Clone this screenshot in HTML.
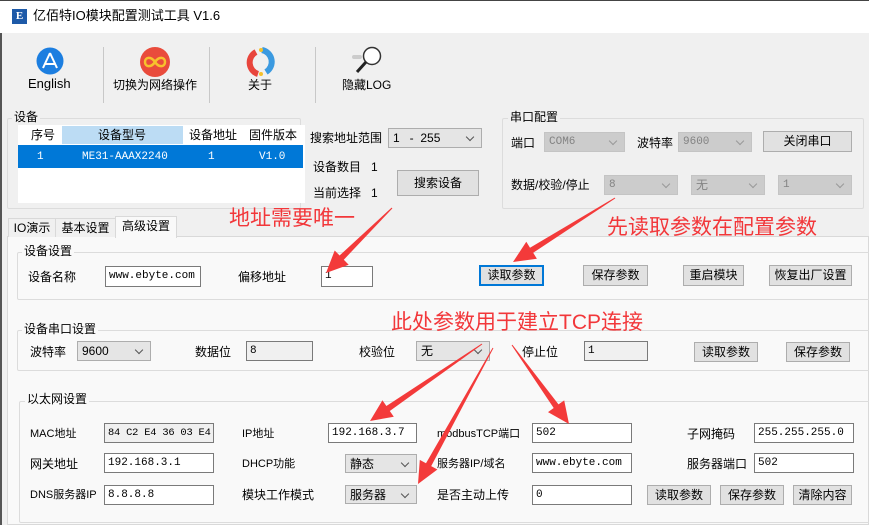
<!DOCTYPE html>
<html><head><meta charset="utf-8"><style>
*{margin:0;padding:0;box-sizing:border-box}
body{width:869px;height:525px;overflow:hidden;background:#f0f0f0;position:relative;font-family:"Liberation Sans","Noto Sans CJK SC",sans-serif;font-size:12px;color:#000}
.a{position:absolute;white-space:nowrap}
.t{position:absolute;white-space:nowrap;line-height:14px}
.grp{position:absolute;border:1px solid #dcdcdc;border-radius:2px}
.gl{position:absolute;background:inherit;padding:0 2px;line-height:14px;white-space:nowrap}
.in{position:absolute;background:#fff;border:1px solid #7a7a7a;font-family:"Liberation Mono","Noto Sans CJK SC",monospace;font-size:11px;padding:2px 0 0 3px;line-height:14px;white-space:nowrap;overflow:hidden}
.ro{background:#f0f0f0}
.cb{position:absolute;background:#e5e5e5;border:1px solid #adadad;padding:2px 0 0 4px;line-height:14px;white-space:nowrap;font-size:12px}
.cb.dis{background:#cccccc;border-color:#c4c4c4;color:#838383;font-family:"Liberation Mono","Noto Sans CJK SC",monospace;font-size:11px}
.cb:after{content:"";position:absolute;right:8px;top:5px;width:5px;height:5px;border-right:1px solid #555;border-bottom:1px solid #555;transform:rotate(45deg)}
.cb.dis:after{border-color:#999}
.bt{position:absolute;background:#e1e1e1;border:1px solid #adadad;text-align:center;line-height:19px;white-space:nowrap}
.red{position:absolute;color:#f2373a;font-size:21px;white-space:nowrap;line-height:24px}
</style></head><body>
<div class="a" style="left:0;top:33px;width:2px;height:492px;background:#555"></div>
<div class="a" style="left:0;top:0;width:869px;height:33px;background:#fff"></div>
<div class="a" style="left:0;top:0;width:869px;height:1px;background:#444"></div>
<div class="a" style="left:12px;top:9px;width:15px;height:15px;background:#1e5aa8;color:#fff;font-weight:bold;font-size:11px;line-height:15px;text-align:center;font-family:'Liberation Serif',serif">E</div>
<div class="t" style="left:33px;top:9px;font-size:13px">亿佰特IO模块配置测试工具 V1.6</div>

<svg class="a" style="left:36px;top:47px" width="28" height="28" viewBox="0 0 28 28"><circle cx="14" cy="14" r="13.5" fill="#1c7ee0"/><path d="M14 6 L7 21 M14 6 L21 21 M9 17 H19" stroke="#fff" stroke-width="2" fill="none"/></svg>
<div class="t" style="left:28px;top:77px;font-size:13px">English</div>
<div class="a" style="left:103px;top:47px;width:1px;height:56px;background:#c8c8c8"></div>
<svg class="a" style="left:140px;top:47px" width="30" height="30" viewBox="0 0 30 30"><circle cx="15" cy="15" r="15" fill="#e94b3c"/><path d="M15 15 C11 9,5 10,5 15 C5 20,11 21,15 15 C19 9,25 10,25 15 C25 20,19 21,15 15Z" stroke="#f7c12d" stroke-width="2.5" fill="none"/></svg>
<div class="t" style="left:113px;top:78px;font-size:12px">切换为网络操作</div>
<div class="a" style="left:209px;top:47px;width:1px;height:56px;background:#c8c8c8"></div>
<svg class="a" style="left:246px;top:47px" width="30" height="30" viewBox="0 0 30 30"><path d="M16 3 A12 12 0 0 1 20 25" stroke="#3b9ae0" stroke-width="6" fill="none"/><path d="M12 27 A12 12 0 0 1 10 5" stroke="#e8453c" stroke-width="6" fill="none"/><circle cx="15" cy="3" r="2" fill="#f5c02a"/><circle cx="15" cy="27" r="2" fill="#f5c02a"/></svg>
<div class="t" style="left:248px;top:78px;font-size:12px">关于</div>
<div class="a" style="left:315px;top:47px;width:1px;height:56px;background:#c8c8c8"></div>
<svg class="a" style="left:352px;top:46px" width="32" height="32" viewBox="0 0 32 32"><rect x="0" y="9" width="10" height="4" rx="2" fill="#ccc"/><circle cx="20" cy="10" r="8.5" fill="#fff" stroke="#333" stroke-width="1.5"/><path d="M14 16 L5 26" stroke="#222" stroke-width="3"/></svg>
<div class="t" style="left:342px;top:78px;font-size:12px">隐藏LOG</div>

<div class="grp" style="left:7px;top:118px;width:294px;height:91px;background:#f0f0f0"></div>
<div class="gl" style="left:12px;top:110px;background:#f0f0f0">设备</div>
<div class="a" style="left:18px;top:125px;width:287px;height:78px;background:#fff"></div>
<div class="a" style="left:62px;top:126px;width:121px;height:18px;background:#bcdcf4"></div>
<div class="t" style="left:31px;top:128px">序号</div>
<div class="t" style="left:98px;top:128px">设备型号</div>
<div class="t" style="left:189px;top:128px">设备地址</div>
<div class="t" style="left:249px;top:128px">固件版本</div>
<div class="a" style="left:18px;top:145px;width:285px;height:23px;background:#0078d7"></div>
<div class="t" style="left:37px;top:150px;color:#fff;font-family:'Liberation Mono',monospace;font-size:11px">1</div>
<div class="t" style="left:82px;top:150px;color:#fff;font-family:'Liberation Mono',monospace;font-size:11px">ME31-AAAX2240</div>
<div class="t" style="left:208px;top:150px;color:#fff;font-family:'Liberation Mono',monospace;font-size:11px">1</div>
<div class="t" style="left:259px;top:150px;color:#fff;font-family:'Liberation Mono',monospace;font-size:11px">V1.0</div>
<div class="t" style="left:310px;top:131px">搜索地址范围</div>
<div class="cb" style="left:388px;top:128px;width:94px;height:20px">1&nbsp;&nbsp;&nbsp;-&nbsp;&nbsp;255</div>
<div class="t" style="left:313px;top:160px">设备数目&nbsp;&nbsp;&nbsp;1</div>
<div class="t" style="left:313px;top:186px">当前选择&nbsp;&nbsp;&nbsp;1</div>
<div class="bt" style="left:397px;top:170px;width:82px;height:26px;line-height:24px">搜索设备</div>

<div class="grp" style="left:502px;top:118px;width:362px;height:91px"></div>
<div class="gl" style="left:508px;top:110px;background:#f0f0f0">串口配置</div>
<div class="t" style="left:511px;top:136px">端口</div>
<div class="cb dis" style="left:544px;top:132px;width:81px;height:20px">COM6</div>
<div class="t" style="left:637px;top:136px">波特率</div>
<div class="cb dis" style="left:678px;top:132px;width:74px;height:20px">9600</div>
<div class="bt" style="left:763px;top:131px;width:89px;height:21px">关闭串口</div>
<div class="t" style="left:511px;top:178px">数据/校验/停止</div>
<div class="cb dis" style="left:604px;top:175px;width:74px;height:20px">8</div>
<div class="cb dis" style="left:691px;top:175px;width:74px;height:20px;font-family:'Liberation Sans','Noto Sans CJK SC',sans-serif;font-size:12px">无</div>
<div class="cb dis" style="left:778px;top:175px;width:74px;height:20px">1</div>

<div class="a" style="left:7px;top:236px;width:862px;height:289px;background:#f9f9f9;border:1px solid #d9d9d9"></div>
<div class="a" style="left:8px;top:218px;width:48px;height:19px;border:1px solid #d9d9d9;border-bottom:none;background:#f0f0f0;text-align:center;line-height:18px">IO演示</div>
<div class="a" style="left:55px;top:218px;width:61px;height:19px;border:1px solid #d9d9d9;border-bottom:none;background:#f0f0f0;text-align:center;line-height:18px">基本设置</div>
<div class="a" style="left:115px;top:216px;width:62px;height:22px;border:1px solid #d9d9d9;border-bottom:none;background:#f9f9f9;text-align:center;line-height:19px">高级设置</div>

<div class="grp" style="left:17px;top:252px;width:860px;height:48px"></div>
<div class="gl" style="left:22px;top:244px;background:#f9f9f9">设备设置</div>
<div class="t" style="left:28px;top:270px">设备名称</div>
<div class="in" style="left:105px;top:266px;width:96px;height:21px">www.ebyte.com</div>
<div class="t" style="left:238px;top:270px">偏移地址</div>
<div class="in" style="left:321px;top:266px;width:52px;height:21px">1</div>
<div class="bt" style="left:479px;top:265px;width:65px;height:21px;border:2px solid #0078d7;line-height:17px">读取参数</div>
<div class="bt" style="left:583px;top:265px;width:65px;height:21px">保存参数</div>
<div class="bt" style="left:683px;top:265px;width:61px;height:21px">重启模块</div>
<div class="bt" style="left:769px;top:265px;width:83px;height:21px">恢复出厂设置</div>

<div class="grp" style="left:17px;top:330px;width:860px;height:41px"></div>
<div class="gl" style="left:22px;top:322px;background:#f9f9f9">设备串口设置</div>
<div class="t" style="left:30px;top:345px">波特率</div>
<div class="cb" style="left:77px;top:341px;width:74px;height:20px">9600</div>
<div class="t" style="left:195px;top:345px">数据位</div>
<div class="in ro" style="left:246px;top:341px;width:67px;height:20px">8</div>
<div class="t" style="left:359px;top:345px">校验位</div>
<div class="cb" style="left:416px;top:341px;width:74px;height:20px">无</div>
<div class="t" style="left:522px;top:345px">停止位</div>
<div class="in ro" style="left:584px;top:341px;width:64px;height:20px">1</div>
<div class="bt" style="left:694px;top:342px;width:64px;height:20px">读取参数</div>
<div class="bt" style="left:786px;top:342px;width:64px;height:20px">保存参数</div>

<div class="grp" style="left:19px;top:401px;width:860px;height:122px"></div>
<div class="gl" style="left:25px;top:392px;background:#f9f9f9">以太网设置</div>
<div class="t" style="left:30px;top:427px;font-size:11px">MAC地址</div>
<div class="in ro" style="left:104px;top:423px;width:110px;height:20px;font-size:10.4px;letter-spacing:-0.2px">84 C2 E4 36 03 E4</div>
<div class="t" style="left:242px;top:427px;font-size:11px">IP地址</div>
<div class="in" style="left:328px;top:423px;width:89px;height:20px">192.168.3.7</div>
<div class="t" style="left:437px;top:427px;font-size:11px">modbusTCP端口</div>
<div class="in" style="left:532px;top:423px;width:100px;height:20px">502</div>
<div class="t" style="left:687px;top:427px">子网掩码</div>
<div class="in" style="left:754px;top:423px;width:100px;height:20px">255.255.255.0</div>

<div class="t" style="left:30px;top:457px">网关地址</div>
<div class="in" style="left:104px;top:453px;width:110px;height:20px">192.168.3.1</div>
<div class="t" style="left:242px;top:457px;font-size:11px">DHCP功能</div>
<div class="cb" style="left:345px;top:454px;width:72px;height:19px">静态</div>
<div class="t" style="left:437px;top:457px;font-size:11px">服务器IP/域名</div>
<div class="in" style="left:532px;top:453px;width:100px;height:20px">www.ebyte.com</div>
<div class="t" style="left:687px;top:457px">服务器端口</div>
<div class="in" style="left:754px;top:453px;width:100px;height:20px">502</div>

<div class="t" style="left:30px;top:488px;font-size:11px">DNS服务器IP</div>
<div class="in" style="left:104px;top:485px;width:110px;height:20px">8.8.8.8</div>
<div class="t" style="left:242px;top:488px">模块工作模式</div>
<div class="cb" style="left:345px;top:485px;width:72px;height:19px">服务器</div>
<div class="t" style="left:437px;top:488px">是否主动上传</div>
<div class="in" style="left:532px;top:485px;width:100px;height:20px">0</div>
<div class="bt" style="left:647px;top:485px;width:64px;height:20px">读取参数</div>
<div class="bt" style="left:720px;top:485px;width:64px;height:20px">保存参数</div>
<div class="bt" style="left:793px;top:485px;width:59px;height:20px">清除内容</div>

<div class="red" style="left:229px;top:207px">地址需要唯一</div>
<div class="red" style="left:607px;top:216px">先读取参数在配置参数</div>
<div class="red" style="left:391px;top:311px">此处参数用于建立TCP连接</div>
<svg class="a" style="left:0;top:0" width="869" height="525" viewBox="0 0 869 525">
<g fill="#f33a3a">
<polygon points="392.4,208.4 343.8,259.7 348.7,264.7 326,273 334.7,250.5 339.6,255.5 391.6,207.6"/>
<polygon points="615.3,198.4 533.2,252.8 536.9,258.8 513,262 526.3,241.8 530.0,247.8 614.7,197.6"/>
<polygon points="482.3,344.4 389.8,411.0 393.8,416.7 370,421 382.4,400.3 386.4,406.0 481.7,343.6"/>
<polygon points="493.4,348.2 431.2,466.1 437.4,469.5 418,484 419.8,459.9 426.0,463.3 492.6,347.8"/>
<polygon points="512.4,344.7 558.5,404.4 564.2,400.4 569,424 548.0,412.1 553.7,408.0 511.6,345.3"/>
</g></svg>
</body></html>
